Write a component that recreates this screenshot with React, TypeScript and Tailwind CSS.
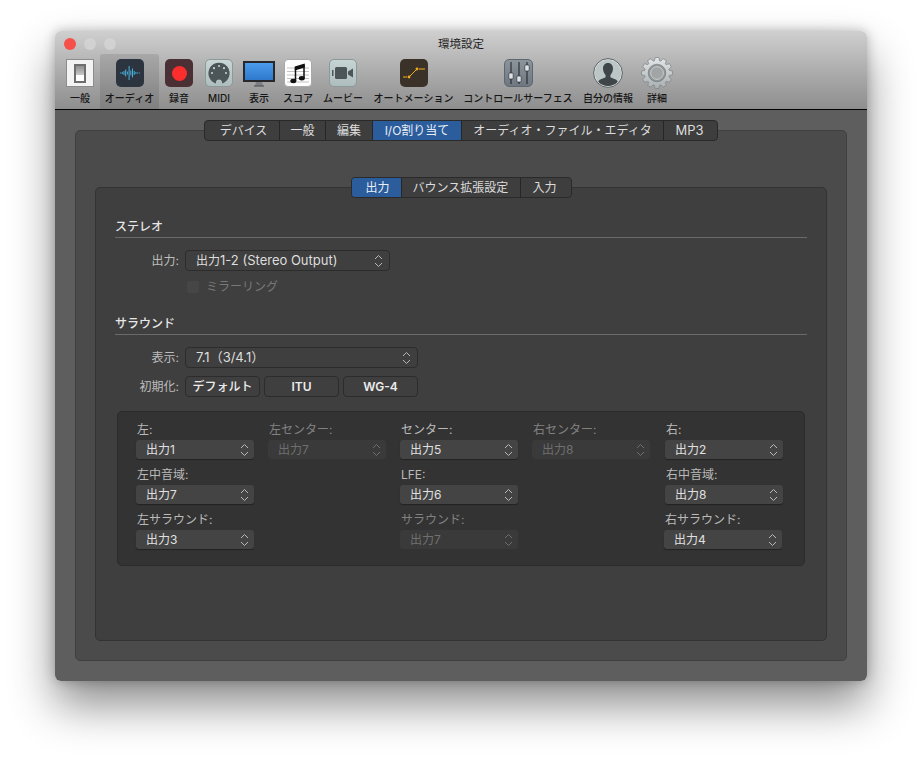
const font = { fontFamily: '"Inter", "Noto Sans CJK JP", sans-serif' };

function Chevrons({ dim }: { dim?: boolean }) {
  return (
    <svg width="9" height="14" viewBox="0 0 9 14" fill="none" stroke={dim ? "#6e6e6e" : "#b8b8b8"} strokeWidth="1">
      <path d="M1 5L4.5 1.5L8 5" />
      <path d="M1 9L4.5 12.5L8 9" />
    </svg>
  );
}

function SwitchIcon() {
  return (
    <div className="w-[28px] h-[28px] bg-[#f3f3f3] border border-[#8c8c8c] flex items-center justify-center">
      <div className="w-[12px] h-[19px] bg-white border-2 border-[#6e6e6e] flex flex-col">
        <div className="h-[9px] bg-gradient-to-b from-[#8e8e8e] to-[#c9c9c9]" />
      </div>
    </div>
  );
}

function AudioIcon() {
  const bars = [1, 2, 4, 7, 3, 14, 5, 9, 4, 2, 1, 1];
  return (
    <div className="w-[28px] h-[28px] rounded-[5px] bg-[#2c3440] flex items-center justify-center">
      <svg width="20" height="16" viewBox="0 0 20 16" stroke="#4cc0f0" strokeWidth="0.9">
        {bars.map((h, i) => (
          <line key={i} x1={i * 1.7 + 0.6} x2={i * 1.7 + 0.6} y1={8 - h / 2} y2={8 + h / 2} />
        ))}
      </svg>
    </div>
  );
}

function RecordIcon() {
  return (
    <div className="w-[28px] h-[28px] rounded-[5px] bg-[#4a2f34] flex items-center justify-center">
      <div className="w-[15px] h-[15px] rounded-full bg-[#fb2e2e]" />
    </div>
  );
}

function MidiIcon() {
  return (
    <div className="w-[28px] h-[28px] rounded-[5px] bg-gradient-to-b from-[#c9d6d6] to-[#aebdbd] border border-[#8b9999] flex items-center justify-center">
      <svg width="24" height="24" viewBox="0 0 24 24">
        <path d="M9 22.4A10.6 10.6 0 1 1 15 22.4L15 20.5A3.2 3.2 0 0 0 9 20.5Z" fill="#4c5557" />
        <g fill="#c4d0d0">
          <circle cx="5" cy="12" r="1.1" />
          <circle cx="7" cy="7.2" r="1.1" />
          <circle cx="12" cy="5" r="1.1" />
          <circle cx="17" cy="7.2" r="1.1" />
          <circle cx="19" cy="12" r="1.1" />
        </g>
      </svg>
    </div>
  );
}

function DisplayIcon() {
  return (
    <svg width="32" height="28" viewBox="0 0 32 28">
      <defs>
        <linearGradient id="screen" x1="0" y1="0" x2="0" y2="1">
          <stop offset="0" stopColor="#4c9cec" />
          <stop offset="1" stopColor="#2e78cc" />
        </linearGradient>
      </defs>
      <rect x="0" y="2" width="32" height="21" fill="#26282b" />
      <rect x="2" y="4" width="28" height="17" fill="url(#screen)" />
      <path d="M13 23H19L20 27H12Z" fill="#7c8084" />
      <rect x="11" y="26.4" width="10" height="1.2" fill="#55585b" />
    </svg>
  );
}

function ScoreIcon() {
  return (
    <div className="w-[28px] h-[28px] rounded-[4px] bg-white border border-[#a8a8a8] flex items-center justify-center">
      <svg width="24" height="24" viewBox="0 0 24 24">
        <g stroke="#b4b4b4" strokeWidth="0.8">
          <line x1="1" x2="23" y1="7" y2="7" />
          <line x1="1" x2="23" y1="10.5" y2="10.5" />
          <line x1="1" x2="23" y1="14" y2="14" />
          <line x1="1" x2="23" y1="17.5" y2="17.5" />
          <line x1="1" x2="23" y1="21" y2="21" />
        </g>
        <path d="M18 3.5V17" stroke="#111" strokeWidth="1.5" fill="none" />
        <path d="M9.5 6V20" stroke="#111" strokeWidth="1.5" />
        <path d="M8.8 5.5L18.7 2.5V6.5L8.8 9.5Z" fill="#111" />
        <ellipse cx="7.3" cy="20" rx="3" ry="2.2" fill="#111" />
        <ellipse cx="15.8" cy="17.2" rx="3" ry="2.2" fill="#111" />
      </svg>
    </div>
  );
}

function MovieIcon() {
  return (
    <div className="w-[28px] h-[28px] rounded-[5px] bg-gradient-to-b from-[#c6d4d4] to-[#aebdbd] border border-[#8b9999] flex items-center justify-center">
      <svg width="22" height="14" viewBox="0 0 22 14">
        <rect x="0" y="4" width="1.5" height="6" fill="#4c5557" />
        <rect x="3" y="1" width="12" height="12" rx="1.5" fill="#4c5557" />
        <path d="M16 5.5L21 2.5V11.5L16 8.5Z" fill="#4c5557" />
      </svg>
    </div>
  );
}

function AutomationIcon() {
  return (
    <div className="w-[28px] h-[28px] rounded-[5px] bg-[#3a3229] flex items-center justify-center">
      <svg width="22" height="14" viewBox="0 0 22 14" fill="none" stroke="#f0ac1c" strokeWidth="1">
        <path d="M0 11H4" />
        <path d="M7 10L13 4" />
        <path d="M16 3H22" />
        <circle cx="6" cy="11" r="1.4" fill="#f0ac1c" stroke="none" />
        <circle cx="14" cy="3" r="1.4" fill="#f0ac1c" stroke="none" />
      </svg>
    </div>
  );
}

function FadersIcon() {
  return (
    <div className="w-[29px] h-[28px] rounded-[5px] bg-gradient-to-b from-[#8c949c] to-[#6f7880] border border-[#5f6872] flex items-center justify-center">
      <svg width="23" height="22" viewBox="0 0 23 22">
        <g stroke="#1d2023" strokeWidth="1">
          <line x1="4" x2="4" y1="0" y2="22" />
          <line x1="12" x2="12" y1="0" y2="22" />
          <line x1="20" x2="20" y1="0" y2="22" />
        </g>
        <g fill="#dfe3e6" stroke="#30343a" strokeWidth="0.7">
          <rect x="1.8" y="11" width="4.4" height="6" rx="1" />
          <rect x="9.8" y="14" width="4.4" height="6" rx="1" />
          <rect x="17.8" y="3" width="4.4" height="6" rx="1" />
        </g>
      </svg>
    </div>
  );
}

function PersonIcon() {
  return (
    <svg width="30" height="30" viewBox="0 0 30 30">
      <defs>
        <clipPath id="me">
          <circle cx="15" cy="15" r="13" />
        </clipPath>
      </defs>
      <circle cx="15" cy="15" r="14.4" fill="#d6dcdc" stroke="#5c6364" strokeWidth="1" />
      <circle cx="15" cy="15" r="13" fill="#bcc6c6" />
      <g clipPath="url(#me)" fill="#3f4647">
        <path d="M15 5C11.6 5 10 7.6 10 10.6C10 13.4 11.3 15.8 12.6 17.2V19.2C10 20.6 5.4 21 4.5 25V30H25.5V25C24.6 21 20 20.6 17.4 19.2V17.2C18.7 15.8 20 13.4 20 10.6C20 7.6 18.4 5 15 5Z" />
      </g>
    </svg>
  );
}

function GearIcon() {
  const teeth = 12;
  const c = 16;
  let d = "";
  for (let i = 0; i < teeth; i++) {
    const a = (i / teeth) * Math.PI * 2;
    const s = (Math.PI * 2) / teeth;
    const pts: [number, number][] = [
      [12.4, a - s * 0.42],
      [15.6, a - s * 0.22],
      [15.6, a + s * 0.22],
      [12.4, a + s * 0.42],
    ];
    pts.forEach(([r, t], j) => {
      const x = (c + r * Math.cos(t)).toFixed(2);
      const y = (c + r * Math.sin(t)).toFixed(2);
      d += `${i === 0 && j === 0 ? "M" : "L"}${x} ${y}`;
    });
  }
  d += "Z";
  return (
    <svg width="32" height="32" viewBox="0 0 32 32">
      <defs>
        <linearGradient id="gear" x1="0" y1="0" x2="0" y2="1">
          <stop offset="0" stopColor="#e4e7e8" />
          <stop offset="1" stopColor="#a9b0b2" />
        </linearGradient>
      </defs>
      <path d={d} fill="url(#gear)" stroke="#7d8385" strokeWidth="0.7" />
      <circle cx="16" cy="16" r="8.8" fill="#8f9596" stroke="#70767a" strokeWidth="0.6" />
      <circle cx="16" cy="16" r="6.4" fill="#a1a5a6" stroke="#d6dadb" strokeWidth="0.8" />
    </svg>
  );
}

function ToolItem({ label, width, active, icon }: { label: string; width: string; active?: boolean; icon: React.ReactNode }) {
  return (
    <div className={`${width} h-[55px] flex flex-col items-center rounded-t-[3px] ${active ? "bg-black/10" : ""}`}>
      <div className="h-[33px] pt-[5px] flex items-center justify-center shrink-0">{icon}</div>
      <div className="mt-[4px] text-[10px] leading-[14px] font-medium text-[#161616] whitespace-nowrap">{label}</div>
    </div>
  );
}

function Tabs({ items, widths, active }: { items: React.ReactNode[]; widths: string[]; active: number }) {
  return (
    <div className="relative z-10 flex h-[21px] self-center rounded-[4px] border border-[#2a2a2a] bg-[#3e3e3e] overflow-hidden">
      {items.map((t, i) => (
        <div
          key={i}
          className={`${widths[i]} flex items-center justify-center text-[12px] whitespace-nowrap ${i > 0 ? "border-l border-[#262626]" : "pl-[3px]"} ${
            i === items.length - 1 ? "pr-[2px]" : ""
          } ${i === active ? "bg-[#2b5c9c] text-[#e8eef6]" : "text-[#dcdcdc]"}`}
        >
          {t}
        </div>
      ))}
    </div>
  );
}

function Select({ value, width }: { value: React.ReactNode; width: string }) {
  return (
    <div className={`${width} h-[21px] flex items-center justify-between pl-[10px] pr-[6px] rounded-[4px] border border-[#2c2c2c] bg-[#3f3f3f] text-[12px] text-[#dedede] whitespace-nowrap`}>
      <span>{value}</span>
      <Chevrons />
    </div>
  );
}

function Heading({ title }: { title: string }) {
  return (
    <div className="border-b border-[#6a6a6a] h-[19px] text-[12px] leading-[16px] font-medium text-[#e6e6e6]">{title}</div>
  );
}

function Field({ label, children }: { label: string; children: React.ReactNode }) {
  return (
    <div className="flex items-center">
      <div className="w-[64px] mr-[6px] text-right text-[12px] text-[#bdbdbd] whitespace-nowrap">{label}</div>
      {children}
    </div>
  );
}

function Btn({ label, strong }: { label: string; strong?: boolean }) {
  return (
    <div className={`w-[75px] h-[21px] flex items-center justify-center rounded-[4px] border border-[#2c2c2c] bg-[#3f3f3f] text-[12px] text-[#ececec] whitespace-nowrap ${strong ? "font-semibold" : "font-medium"}`}>
      {label}
    </div>
  );
}

function Output({ label, value, off, shift }: { label: string; value: string; off?: boolean; shift?: boolean }) {
  return (
    <div className={`w-[118px] h-[45px] ${shift ? "ml-px" : ""}`}>
      <div className={`h-[19px] pl-px text-[12px] leading-[17px] whitespace-nowrap ${off ? "text-[#828282]" : "text-[#bababa]"}`}>{label}</div>
      <div
        className={`h-[19px] w-[118px] flex items-center justify-between pl-[10px] pr-[5px] rounded-[3px] text-[12px] ${
          off ? "bg-[#3a3a3a] text-[#707070]" : "bg-[#444444] text-[#e0e0e0] shadow-[0_1px_1px_rgba(0,0,0,0.35)]"
        }`}
      >
        <span>{value}</span>
        <Chevrons dim={off} />
      </div>
    </div>
  );
}

export default function App() {
  return (
    <div className="w-[922px] h-[760px] overflow-hidden bg-white pt-[31px] pl-[55px]" style={font}>
      <div className="w-[812px] h-[650px] rounded-[6px] overflow-hidden flex flex-col shadow-[0_24px_45px_rgba(0,0,0,0.45),0_0_12px_rgba(0,0,0,0.25)]">
        {/* title + toolbar */}
        <div className="h-[79px] shrink-0 bg-gradient-to-b from-[#cfcfcf] to-[#8e8e8e] border-b border-black flex flex-col">
          <div className="relative h-[23px] flex items-center justify-center pt-[5px] shrink-0">
            <div className="absolute left-[9px] top-[7px] flex gap-[8px]">
              <div className="w-[12px] h-[12px] rounded-full bg-[#f5504a]" />
              <div className="w-[12px] h-[12px] rounded-full bg-[#d4d4d4]/80" />
              <div className="w-[12px] h-[12px] rounded-full bg-[#d4d4d4]/80" />
            </div>
            <span className="text-[11.5px] text-[#1f1f1f]">環境設定</span>
          </div>
          <div className="flex pl-[5px]">
            <ToolItem label="一般" width="w-[40px]" icon={<SwitchIcon />} />
            <ToolItem label="オーディオ" width="w-[59px]" active icon={<AudioIcon />} />
            <ToolItem label="録音" width="w-[40px]" icon={<RecordIcon />} />
            <ToolItem label="MIDI" width="w-[40px]" icon={<MidiIcon />} />
            <ToolItem label="表示" width="w-[40px]" icon={<DisplayIcon />} />
            <ToolItem label="スコア" width="w-[38px]" icon={<ScoreIcon />} />
            <ToolItem label="ムービー" width="w-[52px]" icon={<MovieIcon />} />
            <ToolItem label="オートメーション" width="w-[89px]" icon={<AutomationIcon />} />
            <ToolItem label="コントロールサーフェス" width="w-[120px]" icon={<FadersIcon />} />
            <ToolItem label="自分の情報" width="w-[60px]" icon={<PersonIcon />} />
            <ToolItem label="詳細" width="w-[38px]" icon={<GearIcon />} />
          </div>
        </div>

        {/* body */}
        <div className="flex-1 bg-[#5e5e5e] px-[20px] pb-[20px] pt-[10px] flex flex-col">
          <Tabs
            items={["デバイス", "一般", "編集", "I/O割り当て", "オーディオ・ファイル・エディタ", <span className="text-[13px]">MP3</span>]}
            widths={["w-[74px]", "w-[46px]", "w-[47px]", "w-[89px]", "w-[202px]", "w-[54px]"]}
            active={3}
          />
          <div className="-mt-[11px] flex-1 rounded-[5px] border border-[#404040] bg-[#4b4b4b] px-[19px] pb-[19px] pt-[46px] flex flex-col">
            <Tabs items={["出力", "バウンス拡張設定", "入力"]} widths={["w-[49px]", "w-[119px]", "w-[51px]"]} active={0} />
            <div className="-mt-[11px] flex-1 rounded-[5px] border border-[#333333] bg-[#3f3f3f] px-[19px] pt-[31px]">
              <Heading title="ステレオ" />
              <div className="mt-[12px]">
                <Field label="出力:">
                  <Select value={<>出力<span className="text-[13px]">1-2 (Stereo Output)</span></>} width="w-[205px]" />
                </Field>
              </div>
              <div className="mt-[8px] ml-[72px] flex items-center h-[15px] gap-[7px]">
                <div className="w-[12px] h-[12px] rounded-[2px] bg-[#464646]" />
                <span className="text-[12px] text-[#787878]">ミラーリング</span>
              </div>
              <div className="mt-[22px]">
                <Heading title="サラウンド" />
              </div>
              <div className="mt-[12px]">
                <Field label="表示:">
                  <Select value={<span className="text-[13px]">7.1（3/4.1）</span>} width="w-[233px]" />
                </Field>
              </div>
              <div className="mt-[8px]">
                <Field label="初期化:">
                  <div className="flex gap-[4px]">
                    <Btn label="デフォルト" />
                    <Btn label="ITU" strong />
                    <Btn label="WG-4" strong />
                  </div>
                </Field>
              </div>
              <div className="mt-[14px] mx-[2px] h-[155px] rounded-[5px] border border-[#2b2b2b] bg-[#333333] pl-[18px] pt-[9px]">
                <div className="grid grid-cols-[118px_118px_118px_118px_118px] gap-x-[14px]">
                  <Output label="左:" value="出力1" />
                  <Output label="左センター:" value="出力7" off />
                  <Output label="センター:" value="出力5" />
                  <Output label="右センター:" value="出力8" off />
                  <Output label="右:" value="出力2" shift />
                  <Output label="左中音域:" value="出力7" />
                  <div />
                  <Output label="LFE:" value="出力6" />
                  <div />
                  <Output label="右中音域:" value="出力8" shift />
                  <Output label="左サラウンド:" value="出力3" />
                  <div />
                  <Output label="サラウンド:" value="出力7" off />
                  <div />
                  <Output label="右サラウンド:" value="出力4" />
                </div>
              </div>
            </div>
          </div>
        </div>
      </div>
    </div>
  );
}
